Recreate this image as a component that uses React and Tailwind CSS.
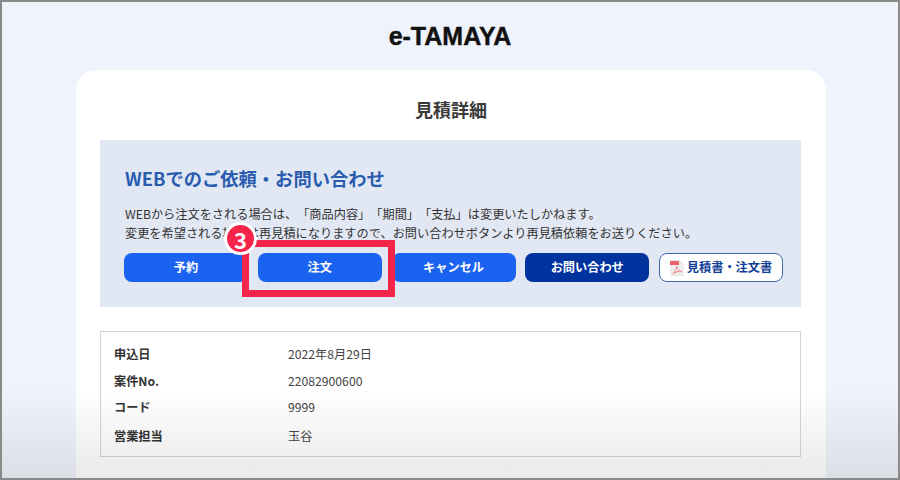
const jp = { fontFamily: '"Noto Sans CJK JP", "Noto Sans", sans-serif' };

function PdfIcon() {
  return (
    <svg width="14" height="16" viewBox="0 0 14 16" className="shrink-0">
      <path d="M1 0.5h8.5L13 4v11.5H1z" fill="#f1efee" stroke="#d9d5d3" strokeWidth="0.6" />
      <rect x="0" y="1" width="9" height="4" fill="#e8626a" />
      <path d="M3 13.5c2-1.5 3.4-4.5 3.6-7.5.6 3 2.2 5 5 5.6-3-.3-6 .3-8.6 1.9z" fill="none" stroke="#ea8a90" strokeWidth="1" />
    </svg>
  );
}

function Row({ label, value, className }) {
  return (
    <div className={`flex items-center text-[12.2px] ${className}`}>
      <div className="w-[174px] font-bold text-[#333333]">{label}</div>
      <div className="text-[#444444]">{value}</div>
    </div>
  );
}

export default function App() {
  const btn = "w-[124px] h-[29px] rounded-[8px] flex items-center justify-center text-[12.2px] font-bold text-white";
  return (
    <div style={jp} className="relative w-[900px] h-[480px] overflow-hidden bg-[#eff3fb] border-2 border-[#8a8a8a] [text-spacing-trim:space-all]">
      <div className="flex justify-center pt-[19px] h-[68px]">
        <div className="font-['Liberation_Sans'] font-bold text-[25px] leading-[30px] text-[#111111] [-webkit-text-stroke:0.4px_#111111]">e-TAMAYA</div>
      </div>

      <div className="ml-[74px] w-[750px] h-[420px] bg-white rounded-t-[20px] px-[24px]">
        <h1 className="h-[79px] flex items-center justify-center text-[18px] font-bold text-[#3a3a3a]">見積詳細</h1>

        <div className="-mt-[9px] w-[701px] h-[167px] bg-[#e2e8f3] pt-[23px] pl-[25px]">
          <div className="text-[18.3px] leading-[30px] font-bold text-[#2a5cb0]">WEBでのご依頼・お問い合わせ</div>
          <div className="mt-[12px] text-[12.2px] leading-[19px] text-[#333333]">
            <p>WEBから注文をされる場合は、「商品内容」「期間」「支払」は変更いたしかねます。</p>
            <p>変更を希望される場合は再見積になりますので、お問い合わせボタンより再見積依頼をお送りください。</p>
          </div>
          <div className="-ml-px mt-[10px] flex gap-[9.75px]">
            <div className={`${btn} bg-[#1a63f0]`}>予約</div>
            <div className={`${btn} bg-[#1a63f0]`}>注文</div>
            <div className={`${btn} bg-[#1a63f0]`}>キャンセル</div>
            <div className={`${btn} bg-[#00339e]`}>お問い合わせ</div>
            <div className="w-[124px] h-[29px] rounded-[8px] flex items-center justify-center gap-[3px] bg-white border border-[#3f6ab0] text-[12.2px] font-bold text-[#123f96]">
              <PdfIcon />
              見積書・注文書
            </div>
          </div>
        </div>

        <div className="mt-[24px] w-[701px] h-[126px] border border-[#d5d5d5] pl-[13px] pt-[9px]">
          <Row label="申込日" value="2022年8月29日" className="h-[27px]" />
          <Row label="案件No." value="22082900600" className="h-[26px]" />
          <Row label="コード" value="9999" className="h-[27px]" />
          <Row label="営業担当" value="玉谷" className="h-[30px]" />
        </div>
      </div>

      <div className="absolute left-0 right-0 bottom-0 h-[90px] bg-gradient-to-b from-transparent to-black/[0.085]" />

      <div className="absolute left-[240px] top-[238px] w-[153px] h-[57px] border-[7px] border-[#f5244a]" />
      <div className="absolute left-[222px] top-[220px] w-[33px] h-[33px] rounded-full bg-[#f5244a] border-[3px] border-white flex items-center justify-center text-white font-bold text-[22px] leading-none">3</div>
    </div>
  );
}
